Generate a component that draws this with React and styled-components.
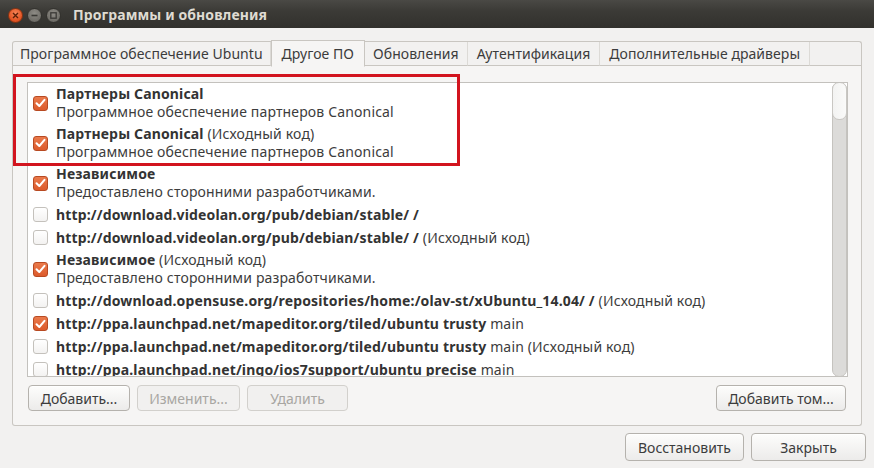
import React from "react";
import styled, { createGlobalStyle, css } from "styled-components";

const Global = createGlobalStyle`
  html, body { margin: 0; padding: 0; background: #f2f1f0; overflow: hidden; }
  body { font-family: "Noto Sans", "Open Sans", sans-serif; }
  * { box-sizing: border-box; }
`;

const Window = styled.div`
  width: 874px;
  height: 468px;
  display: flex;
  flex-direction: column;
  background: #f2f1f0;
  color: #3c3c3c;
  font-size: 14px;
  letter-spacing: 0.15px;
`;

const TitleBar = styled.div`
  height: 28px;
  flex: none;
  display: flex;
  align-items: center;
  padding-left: 8px;
  background: linear-gradient(#4a4945, #3b3a36 40%, #32312d);
`;

const Controls = styled.div`
  display: flex;
  align-items: center;
  gap: 4px;
  margin-right: 12px;
  margin-top: 2px;
`;

const Circle = styled.div`
  width: 15px;
  height: 15px;
  border-radius: 50%;
  display: flex;
  align-items: center;
  justify-content: center;
  ${(p) =>
    p.$close
      ? css`
          background: radial-gradient(circle at 50% 35%, #f6875a, #e55726 60%, #c9441a);
          border: 1px solid #8a3412;
        `
      : css`
          background: radial-gradient(circle at 50% 35%, #8e8c86, #6f6d67 70%, #5a5853);
          border: 1px solid #33322e;
        `}
`;

const Title = styled.div`
  color: #dfdbd2;
  font-weight: bold;
  font-size: 14px;
  letter-spacing: 0.1px;
`;

const Body = styled.div`
  flex: 1;
  display: flex;
  flex-direction: column;
  padding: 13px 8px 7px 12px;
`;

const Notebook = styled.div`
  display: flex;
  flex-direction: column;
  width: 850px;
`;

const TabStrip = styled.div`
  display: flex;
  height: 25px;
  border: 1px solid #c9c6c1;
  border-bottom: none;
  border-radius: 3px 3px 0 0;
  background: #f2f1f0;
  position: relative;
  z-index: 1;
`;

const Tab = styled.div`
  padding: 0 ${(p) => (p.$pad ? p.$pad : 7)}px;
  display: flex;
  align-items: center;
  white-space: nowrap;
  font-size: 14px;
  letter-spacing: 0.05px;
  color: #3c3c3c;
  border-right: 1px solid #dcdad6;
  border-bottom: 1px solid #c9c6c1;
  ${(p) =>
    p.$active &&
    css`
      background: #f6f5f4;
      border-bottom-color: #f6f5f4;
      border-left: 1px solid #c9c6c1;
      border-right: 1px solid #c9c6c1;
      margin-top: -1px;
      height: 26px;
      box-shadow: 0 -1px 0 #c9c6c1;
    `}
`;

const TabFill = styled.div`
  flex: 1;
  border-bottom: 1px solid #c9c6c1;
`;

const Panel = styled.div`
  position: relative;
  height: 360px;
  border: 1px solid #c9c6c1;
  border-top: none;
  border-radius: 0 0 3px 3px;
  background: #f6f5f4;
  padding: 16px 13px 0 14px;
  display: flex;
  flex-direction: column;
`;

const ListBox = styled.div`
  height: 295px;
  border: 1px solid #c3c1bd;
  background: #fff;
  display: flex;
  overflow: hidden;
`;

const List = styled.div`
  flex: 1;
  overflow: hidden;
`;

const Row = styled.div`
  display: flex;
  align-items: center;
  padding: 2px 0 2px 5px;
  height: ${(p) => (p.$two ? 40 : 23)}px;
  flex: none;
`;

const Check = styled.div`
  width: 15px;
  height: 15px;
  flex: none;
  border-radius: 3px;
  margin-right: 8px;
  display: flex;
  align-items: center;
  justify-content: center;
  ${(p) =>
    p.$on
      ? css`
          background: linear-gradient(#ea7a4b, #dc5a2b);
          border: 1px solid #b84a22;
        `
      : css`
          background: linear-gradient(#ffffff, #f3f2f1);
          border: 1px solid #c4c1bc;
        `}
`;

const Texts = styled.div`
  display: flex;
  flex-direction: column;
  line-height: 18px;
  white-space: nowrap;
  color: #3c3c3c;
`;

const Line = styled.div`
  line-height: ${(p) => (p.$single ? 19 : 18)}px;
`;

const B = styled.b`
  font-weight: bold;
  color: #333;
`;

const Scrollbar = styled.div`
  width: 15px;
  flex: none;
  margin: -1px 0 -1px 0;
  background: #dcdbd9;
  border: 1px solid #c5c3bf;
  border-radius: 7px;
  position: relative;
  display: flex;
  flex-direction: column;
`;

const Thumb = styled.div`
  height: 38px;
  margin: -1px;
  border-radius: 7px;
  background: linear-gradient(90deg, #f3f3f2, #fafaf9);
  border: 1px solid #c9c7c3;
`;

const ButtonRow = styled.div`
  display: flex;
  gap: 7px;
  margin-top: 8px;
  padding: 0 2px 0 1px;
`;

const Spacer = styled.div`
  flex: 1;
`;

const Button = styled.div`
  height: ${(p) => (p.$h ? p.$h : 26)}px;
  width: ${(p) => p.$w}px;
  display: flex;
  align-items: center;
  justify-content: center;
  border-radius: 4px;
  font-size: 14px;
  letter-spacing: 0;
  white-space: nowrap;
  ${(p) =>
    p.$disabled
      ? css`
          color: #a8a6a2;
          border: 1px solid #d2d0cc;
          background: #f1f0ef;
        `
      : css`
          color: #3c3c3c;
          border: 1px solid #b5b2ad;
          background: linear-gradient(#fdfdfc, #ecebea);
          box-shadow: 0 1px 0 rgba(255, 255, 255, 0.8) inset;
        `}
`;

const Footer = styled.div`
  display: flex;
  justify-content: flex-end;
  gap: 7px;
  margin-top: 7px;
`;

const Highlight = styled.div`
  position: absolute;
  left: 0px;
  top: 8px;
  width: 447px;
  height: 92px;
  border: 3px solid #d2141e;
  pointer-events: none;
`;

const CheckMark = () => (
  <svg width="11" height="10" viewBox="0 0 11 10">
    <path d="M1.5 5.2 L4.3 8 L9.5 1.8" fill="none" stroke="#fff" strokeWidth="2" strokeLinecap="round" strokeLinejoin="round" />
  </svg>
);

const rows = [
  { on: true, title: "Партнеры Canonical", sub: "Программное обеспечение партнеров Canonical" },
  { on: true, title: "Партнеры Canonical", extra: " (Исходный код)", sub: "Программное обеспечение партнеров Canonical" },
  { on: true, title: "Независимое", sub: "Предоставлено сторонними разработчиками." },
  { on: false, title: "http://download.videolan.org/pub/debian/stable/ /" },
  { on: false, title: "http://download.videolan.org/pub/debian/stable/ /", extra: " (Исходный код)" },
  { on: true, title: "Независимое", extra: " (Исходный код)", sub: "Предоставлено сторонними разработчиками." },
  { on: false, title: "http://download.opensuse.org/repositories/home:/olav-st/xUbuntu_14.04/ /", extra: " (Исходный код)" },
  { on: true, title: "http://ppa.launchpad.net/mapeditor.org/tiled/ubuntu trusty", extra: " main" },
  { on: false, title: "http://ppa.launchpad.net/mapeditor.org/tiled/ubuntu trusty", extra: " main (Исходный код)" },
  { on: false, title: "http://ppa.launchpad.net/ingo/ios7support/ubuntu precise", extra: " main" },
];

export default function App() {
  return (
    <>
      <Global />
      <Window>
        <TitleBar>
          <Controls>
            <Circle $close>
              <svg width="7" height="7" viewBox="0 0 7 7">
                <path d="M1 1 L6 6 M6 1 L1 6" stroke="#5a1f08" strokeWidth="1.4" />
              </svg>
            </Circle>
            <Circle>
              <svg width="7" height="7" viewBox="0 0 7 7">
                <path d="M0.5 3.5 H6.5" stroke="#3a3935" strokeWidth="1.6" />
              </svg>
            </Circle>
            <Circle>
              <svg width="7" height="7" viewBox="0 0 7 7">
                <rect x="0.8" y="0.8" width="5.4" height="5.4" fill="none" stroke="#3a3935" strokeWidth="1.3" />
              </svg>
            </Circle>
          </Controls>
          <Title>Программы и обновления</Title>
        </TitleBar>
        <Body>
          <Notebook>
            <TabStrip>
              <Tab>Программное обеспечение Ubuntu</Tab>
              <Tab $active $pad={10}>Другое ПО</Tab>
              <Tab $pad={8}>Обновления</Tab>
              <Tab $pad={9}>Аутентификация</Tab>
              <Tab $pad={9}>Дополнительные драйверы</Tab>
              <TabFill />
            </TabStrip>
            <Panel>
              <ListBox>
                <List>
                  {rows.map((r, i) => (
                    <Row key={i} $two={!!r.sub}>
                      <Check $on={r.on}>{r.on && <CheckMark />}</Check>
                      <Texts>
                        <Line $single={!r.sub}>
                          <B>{r.title}</B>
                          {r.extra}
                        </Line>
                        {r.sub && <Line>{r.sub}</Line>}
                      </Texts>
                    </Row>
                  ))}
                </List>
                <Scrollbar>
                  <Thumb />
                </Scrollbar>
              </ListBox>
              <ButtonRow>
                <Button $w={102}>Добавить...</Button>
                <Button $w={103} $disabled>Изменить...</Button>
                <Button $w={101} $disabled>Удалить</Button>
                <Spacer />
                <Button $w={130}>Добавить том...</Button>
              </ButtonRow>
              <Highlight />
            </Panel>
          </Notebook>
          <Footer>
            <Button $w={119} $h={28}>Восстановить</Button>
            <Button $w={115} $h={28}>Закрыть</Button>
          </Footer>
        </Body>
      </Window>
    </>
  );
}
